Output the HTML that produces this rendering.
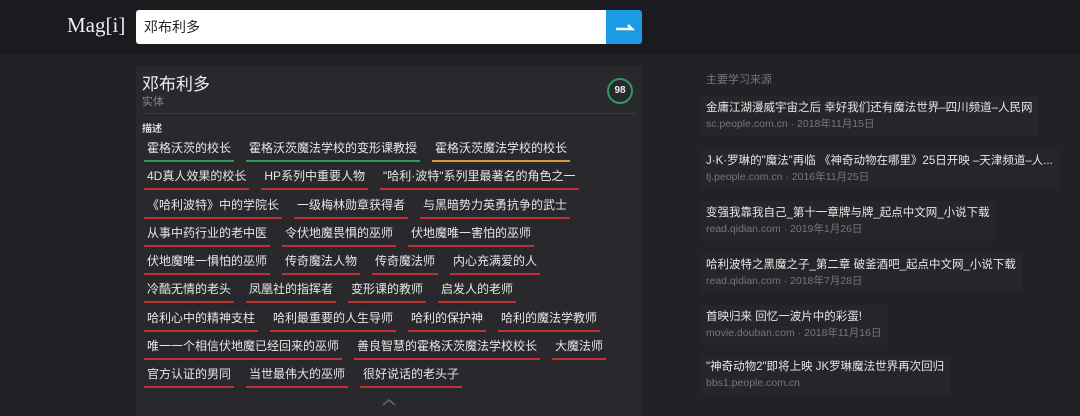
<!DOCTYPE html><html><head><meta charset="utf-8"><style>
body{margin:0;width:1080px;height:408px;overflow:hidden;background:#222126;font-family:"Liberation Sans","Noto Sans CJK SC",sans-serif;color:#ddd;position:relative}
.hd{position:absolute;left:0;top:0;width:1080px;height:54px;background:#1b1a1f}
.logo{position:absolute;left:67px;top:13px;font-size:21px;color:#eee;font-family:"Liberation Serif","Noto Sans CJK SC",serif}
.inp{position:absolute;left:136px;top:10px;width:470px;height:34px;background:#fff;border-radius:3px 0 0 3px;color:#222;font-size:14px;line-height:34px;padding-left:8px;box-sizing:border-box}
.btn{position:absolute;left:606px;top:10px;width:36px;height:34px;background:#1a9be6;border-radius:0 3px 3px 0}
.card{position:absolute;left:136px;top:66px;width:506px;height:350px;background:#29282d}
.t{position:absolute;left:6px;top:4px;font-size:17px;color:#eee}
.s{position:absolute;left:6px;top:27px;font-size:11px;color:#888}
.sc{position:absolute;left:471px;top:12px;width:22px;height:22px;border:2px solid #2e9a5a;border-radius:50%;font-size:10px;line-height:22px;text-align:center;color:#eee;font-weight:bold}
.dv{position:absolute;left:6px;right:6px;top:47px;border-top:1px solid #3a393e}
.ms{position:absolute;left:6px;top:54px;font-size:10px;font-weight:bold;color:#ddd}
.tags{position:absolute;left:8px;top:70px;width:490px;font-size:12px}
.row{height:28.3px;white-space:nowrap}
.tg{display:inline-block;padding:3px 3px 4px;margin-right:12px;border-bottom:2px solid #c23131;color:#e6e6e6}
.g{border-color:#2e9a5a}.o{border-color:#d99a3c}
.side{position:absolute;left:706px;top:71px;font-size:11px;color:#777}
.it{position:absolute;left:700px;background:#262529;padding:4px 6px;font-size:11.5px;color:#e6e6e6;line-height:16px}
.it span{display:block;font-size:10.5px;color:#777}
</style></head><body>
<div class="hd"><div class="logo">Mag[i]</div><div class="inp">邓布利多</div><div class="btn"><svg width="36" height="34"><path d="M10 19h16l-4-4" stroke="#fff" stroke-width="2.5" fill="none"/></svg></div></div>
<div class="card"><div class="t">邓布利多</div><div class="s">实体</div><div class="sc">98</div><div class="dv"></div><div class="ms">描述</div>
<div class="tags">
<div class="row"><span class="tg g">霍格沃茨的校长</span><span class="tg g">霍格沃茨魔法学校的变形课教授</span><span class="tg o">霍格沃茨魔法学校的校长</span></div>
<div class="row"><span class="tg">4D真人效果的校长</span><span class="tg">HP系列中重要人物</span><span class="tg">"哈利·波特"系列里最著名的角色之一</span></div>
<div class="row"><span class="tg">《哈利波特》中的学院长</span><span class="tg">一级梅林勋章获得者</span><span class="tg">与黑暗势力英勇抗争的武士</span></div>
<div class="row"><span class="tg">从事中药行业的老中医</span><span class="tg">令伏地魔畏惧的巫师</span><span class="tg">伏地魔唯一害怕的巫师</span></div>
<div class="row"><span class="tg">伏地魔唯一惧怕的巫师</span><span class="tg">传奇魔法人物</span><span class="tg">传奇魔法师</span><span class="tg">内心充满爱的人</span></div>
<div class="row"><span class="tg">冷酷无情的老头</span><span class="tg">凤凰社的指挥者</span><span class="tg">变形课的教师</span><span class="tg">启发人的老师</span></div>
<div class="row"><span class="tg">哈利心中的精神支柱</span><span class="tg">哈利最重要的人生导师</span><span class="tg">哈利的保护神</span><span class="tg">哈利的魔法学教师</span></div>
<div class="row"><span class="tg">唯一一个相信伏地魔已经回来的巫师</span><span class="tg">善良智慧的霍格沃茨魔法学校校长</span><span class="tg">大魔法师</span></div>
<div class="row"><span class="tg">官方认证的男同</span><span class="tg">当世最伟大的巫师</span><span class="tg">很好说话的老头子</span></div>
</div>
<svg style="position:absolute;left:246px;top:332px" width="14" height="8"><path d="M1 7l6-5 6 5" stroke="#666" stroke-width="1.5" fill="none"/></svg>
</div>
<div class="side">主要学习来源</div>
<div class="it" style="top:96px">金庸江湖漫威宇宙之后 幸好我们还有魔法世界–四川频道–人民网<span>sc.people.com.cn · 2018年11月15日</span></div>
<div class="it" style="top:149px">J·K·罗琳的"魔法"再临 《神奇动物在哪里》25日开映 –天津频道–人...<span>tj.people.com.cn · 2016年11月25日</span></div>
<div class="it" style="top:201px">变强我靠我自己_第十一章牌与牌_起点中文网_小说下载<span>read.qidian.com · 2019年1月26日</span></div>
<div class="it" style="top:253px">哈利波特之黑魔之子_第二章 破釜酒吧_起点中文网_小说下载<span>read.qidian.com · 2018年7月28日</span></div>
<div class="it" style="top:305px">首映归来 回忆一波片中的彩蛋!<span>movie.douban.com · 2018年11月16日</span></div>
<div class="it" style="top:355px">"神奇动物2"即将上映 JK罗琳魔法世界再次回归<span>bbs1.people.com.cn</span></div>
</body></html>
